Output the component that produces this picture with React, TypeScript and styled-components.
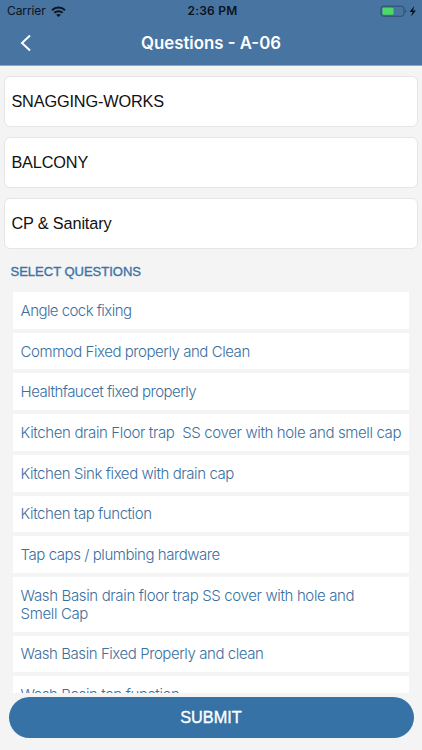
import React from 'react';
import styled, { createGlobalStyle } from 'styled-components';

const GlobalStyle = createGlobalStyle`
  * { box-sizing: border-box; }
  html, body { margin: 0; padding: 0; }
  body { background: #f4f4f4; font-family: "Liberation Sans", Arial, sans-serif; overflow: hidden; }
`;

const Screen = styled.main`
  width: 422px;
  height: 750px;
  display: flex;
  flex-direction: column;
  background: #f4f4f4;
  overflow: hidden;
`;

const Header = styled.header`
  flex: 0 0 66px;
  background: #4874a2;
  border-bottom: 1px solid #8ba9c6;
`;

const StatusBar = styled.div`
  height: 22px;
  padding: 0 5px 0 7px;
  display: grid;
  grid-template-columns: 1fr auto 1fr;
  align-items: center;
  color: #0b131c;
  font-family: Inter, sans-serif;
  font-size: 12px;
  line-height: 22px;
`;

const Carrier = styled.div`
  display: flex;
  align-items: center;
  gap: 5px;
  letter-spacing: -0.1px;
`;

const Clock = styled.div`
  font-weight: 600;
  letter-spacing: 0.2px;
  padding-left: 1px;
`;

const Power = styled.div`
  display: flex;
  justify-content: flex-end;
`;

const NavBar = styled.div`
  height: 42px;
  display: grid;
  grid-template-columns: 60px 1fr 60px;
  align-items: center;
`;

const BackButton = styled.button`
  border: 0;
  background: none;
  padding: 0 0 1px 20px;
  display: flex;
`;

const Title = styled.h1`
  margin: 0;
  text-align: center;
  color: #fff;
  font: 600 16.8px/22px Inter, sans-serif;
`;

const Fields = styled.section`
  display: flex;
  flex-direction: column;
  gap: 10px;
  padding: 9.5px 4.4px 0;
`;

const Field = styled.div`
  height: 51.2px;
  display: flex;
  align-items: center;
  padding: 0.3px 6px 0;
  background: #fff;
  border: 1px solid #e5e5e5;
  border-radius: 6px;
  color: #111;
  font-size: 16.3px;
  letter-spacing: -0.15px;
`;

const SectionTitle = styled.h2`
  margin: 14px 0 0 10.5px;
  color: #3a73a6;
  font-size: 13px;
  line-height: 18px;
  font-weight: 500;
  -webkit-text-stroke: 0.35px #3a73a6;
`;

const List = styled.ul`
  flex: 1 1 0;
  min-height: 0;
  overflow: hidden;
  margin: 11px 12.6px 0;
  padding: 0;
  list-style: none;
  display: flex;
  flex-direction: column;
  gap: 4px;
`;

const Question = styled.li<{ $spacing: number }>`
  flex: none;
  padding: 9.9px 8px 8.8px;
  background: #fff;
  color: #3a6fa0;
  font: 300 15px/18px Inter, "Liberation Sans", sans-serif;
  white-space: pre;
  letter-spacing: ${({ $spacing }) => $spacing}px;
`;

const Footer = styled.footer`
  flex: 0 0 57.5px;
  padding: 4.5px 8.5px 12.5px;
`;

const Submit = styled.button`
  width: 100%;
  height: 40.5px;
  border: 0;
  border-radius: 21px;
  background: #3672a6;
  color: #fff;
  font: 500 16.3px/20px "Liberation Sans", Arial, sans-serif;
  -webkit-text-stroke: 0.35px #fff;
`;

const WifiIcon = () => (
  <svg width="15" height="11" viewBox="0 0 15 11" fill="none" stroke="#0b131c" strokeWidth="2">
    <path d="M1 4.2C4.7.7 10.3.7 14 4.2M3.4 6.8c2.3-2.1 5.9-2.1 8.2 0" />
    <path d="M5.1 8.7c1.2-1.1 3.6-1.1 4.8 0L7.5 11Z" fill="#0b131c" stroke="none" />
  </svg>
);

const BatteryIcon = () => (
  <svg width="37" height="13" viewBox="0 0 37 13">
    <rect x="1" y="1.2" width="23" height="10" rx="2.5" fill="none" stroke="#2c4b6b" />
    <rect x="2.5" y="2.7" width="11" height="7" rx="1" fill="#4cd964" />
    <path d="M25.2 4.5c1.5.5 1.5 2.9 0 3.4Z" fill="#2c4b6b" />
    <path d="M34.2 1 29.6 7h2.9L31 11.6 36 5.4h-3Z" fill="#071019" />
  </svg>
);

const ChevronIcon = () => (
  <svg width="12" height="18" viewBox="0 0 12 18" fill="none" stroke="#fff" strokeWidth="2">
    <path d="m10 1.5-8 7.5 8 7.5" />
  </svg>
);

const fields = ['SNAGGING-WORKS', 'BALCONY', 'CP & Sanitary'];

const questions = [
  { text: 'Angle cock fixing', spacing: -0.55 },
  { text: 'Commod Fixed properly and Clean', spacing: -0.45 },
  { text: 'Healthfaucet fixed properly', spacing: -0.52 },
  { text: 'Kitchen drain Floor trap  SS cover with hole and smell cap', spacing: -0.37 },
  { text: 'Kitchen Sink fixed with drain cap', spacing: -0.42 },
  { text: 'Kitchen tap function', spacing: -0.44 },
  { text: 'Tap caps / plumbing hardware', spacing: -0.45 },
  { text: 'Wash Basin drain floor trap SS cover with hole and\nSmell Cap', spacing: -0.36 },
  { text: 'Wash Basin Fixed Properly and clean', spacing: -0.43 },
  { text: 'Wash Basin tap function', spacing: -0.4 },
];

export default function App() {
  return (
    <>
      <GlobalStyle />
      <Screen>
        <Header>
          <StatusBar>
            <Carrier>Carrier <WifiIcon /></Carrier>
            <Clock>2:36 PM</Clock>
            <Power><BatteryIcon /></Power>
          </StatusBar>
          <NavBar>
            <BackButton aria-label="Back"><ChevronIcon /></BackButton>
            <Title>Questions - A-06</Title>
          </NavBar>
        </Header>
        <Fields>
          {fields.map((field) => <Field key={field}>{field}</Field>)}
        </Fields>
        <SectionTitle>SELECT QUESTIONS</SectionTitle>
        <List>
          {questions.map(({ text, spacing }) => (
            <Question key={text} $spacing={spacing}>{text}</Question>
          ))}
        </List>
        <Footer>
          <Submit>SUBMIT</Submit>
        </Footer>
      </Screen>
    </>
  );
}
